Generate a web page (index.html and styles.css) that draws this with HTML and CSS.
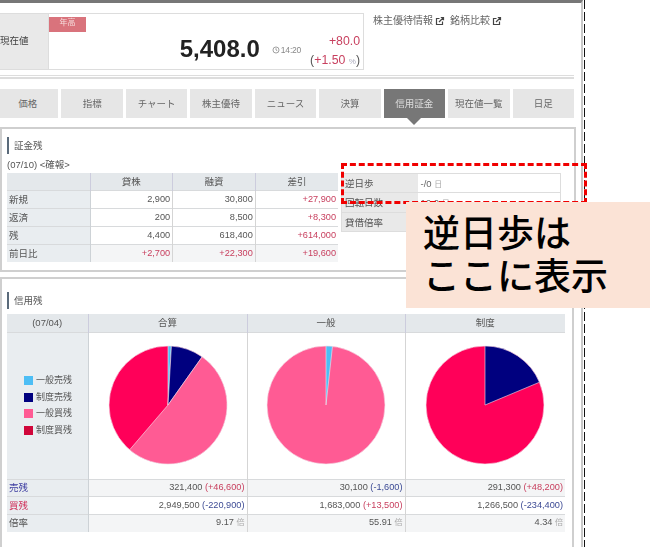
FILE: index.html
```html
<!DOCTYPE html>
<html lang="ja">
<head>
<meta charset="utf-8">
<title>信用証金</title>
<link rel="stylesheet" href="styles.css">
</head>
<body>
<div class="stage">
  <div class="outer">
    <div class="page">
      <section class="quote">
        <div class="quote-label">現在値</div>
        <div class="quote-box">
          <span class="badge">年高</span>
          <div class="price-line">
            <span class="price">5,408.0</span>
            <span class="time"><svg class="clock" viewBox="0 0 10 10"><circle cx="5" cy="5" r="3.8"/><path d="M5 2.8V5l1.6 1"/></svg>14:20</span>
            <div class="change">
              <span class="up big">+80.0</span>
              <span class="big">(<span class="up">+1.50</span> <small>%</small>)</span>
            </div>
          </div>
        </div>
        <div class="links">
          <span>株主優待情報</span>
          <svg class="ext" viewBox="0 0 10 10"><path d="M7.5 5.5V8.5H1.5V2.5H4.5M4 6l4.5-4.5M5.8 1.5H8.5V4.2"/></svg>
          <span>銘柄比較</span>
          <svg class="ext" viewBox="0 0 10 10"><path d="M7.5 5.5V8.5H1.5V2.5H4.5M4 6l4.5-4.5M5.8 1.5H8.5V4.2"/></svg>
        </div>
      </section>
      <div class="rule"></div>
      <nav class="tabs">
        <span class="tab">価格</span>
        <span class="tab">指標</span>
        <span class="tab">チャート</span>
        <span class="tab">株主優待</span>
        <span class="tab">ニュース</span>
        <span class="tab">決算</span>
        <span class="tab active">信用証金</span>
        <span class="tab">現在値一覧</span>
        <span class="tab">日足</span>
      </nav>

      <section class="card card-top">
        <h2 class="heading">証金残</h2>
        <p class="date">(07/10) &lt;確報&gt;</p>
        <div class="card-row">
          <table class="grid lending">
            <thead>
              <tr><th></th><th>貸株</th><th>融資</th><th>差引</th></tr>
            </thead>
            <tbody>
              <tr><th>新規</th><td>2,900</td><td>30,800</td><td class="up">+27,900</td></tr>
              <tr><th>返済</th><td>200</td><td>8,500</td><td class="up">+8,300</td></tr>
              <tr><th>残</th><td>4,400</td><td>618,400</td><td class="up">+614,000</td></tr>
              <tr class="shade"><th>前日比</th><td class="up">+2,700</td><td class="up">+22,300</td><td class="up">+19,600</td></tr>
            </tbody>
          </table>
          <table class="side">
            <tr><th>逆日歩</th><td>-/0 <small>日</small></td></tr>
            <tr><th>回転日数</th><td>16.0 <small>日</small></td></tr>
            <tr><th>貸借倍率</th><td></td></tr>
          </table>
        </div>
      </section>

      <section class="card card-bottom">
        <h2 class="heading">信用残</h2>
        <table class="grid margin">
          <thead>
            <tr><th class="center">(07/04)</th><th>合算</th><th>一般</th><th>制度</th></tr>
          </thead>
          <tbody>
            <tr class="chart-row">
              <th>
                <ul class="legend">
                  <li><i class="sw s1"></i>一般売残</li>
                  <li><i class="sw s2"></i>制度売残</li>
                  <li><i class="sw s3"></i>一般買残</li>
                  <li><i class="sw s4"></i>制度買残</li>
                </ul>
              </th>
              <td>
                <svg class="pie" viewBox="-60 -60 120 120">
                  <circle r="59" class="p4"/>
                  <path class="p1" d="M0 0V-59A59 59 0 0 1 3.41 -58.9Z"/>
                  <path class="p2" d="M0 0L3.41 -58.9A59 59 0 0 1 34.14 -48.12Z"/>
                  <path class="p3" d="M0 0L34.14 -48.12A59 59 0 1 1 -38.36 44.82Z"/>
                </svg>
              </td>
              <td>
                <svg class="pie" viewBox="-60 -60 120 120">
                  <circle r="59" class="p3"/>
                  <path class="p1" d="M0 0V-59A59 59 0 0 1 6.47 -58.64Z"/>
                </svg>
              </td>
              <td>
                <svg class="pie" viewBox="-60 -60 120 120">
                  <circle r="59" class="p4"/>
                  <path class="p2" d="M0 0V-59A59 59 0 0 1 54.43 -22.77Z"/>
                </svg>
              </td>
            </tr>
            <tr class="shade"><th class="sell">売残</th><td>321,400 <span class="up">(+46,600)</span></td><td>30,100 <span class="down">(-1,600)</span></td><td>291,300 <span class="up">(+48,200)</span></td></tr>
            <tr><th class="buy">買残</th><td>2,949,500 <span class="down">(-220,900)</span></td><td>1,683,000 <span class="up">(+13,500)</span></td><td>1,266,500 <span class="down">(-234,400)</span></td></tr>
            <tr class="shade"><th>倍率</th><td>9.17 <small>倍</small></td><td>55.91 <small>倍</small></td><td>4.34 <small>倍</small></td></tr>
          </tbody>
        </table>
      </section>
    </div>
  </div>
  <div class="dash-box"></div>
  <div class="callout">逆日歩は<br>ここに表示</div>
</div>
</body>
</html>
```
FILE: styles.css
```css
* { box-sizing: border-box; }
html, body { margin: 0; padding: 0; background: #fff; }
body {
  font-family: "Liberation Sans", "Noto Sans CJK JP", sans-serif;
  color: #555;
  font-size: 9.5px;
}
.stage { position: relative; width: 650px; height: 547px; overflow: hidden; }
.outer {
  width: 585px;
  height: 547px;
  padding-right: 2px;
  background: repeating-linear-gradient(to bottom, #111 0 9px, transparent 9px 12px) right top / 1.3px 100% no-repeat;
}
.page {
  height: 547px;
  border-top: 3px solid #777;
  border-right: 2px solid #c8c8c8;
  padding: 10px 7px 0 0;
  filter: blur(0.4px);
}
.quote { display: flex; height: 57px; }
.quote-label {
  width: 48px;
  background: #e9e9e9;
  border-top: 1px solid #ddd;
  border-bottom: 1px solid #ddd;
  display: flex;
  align-items: center;
  font-size: 9.5px;
  color: #444;
  padding-bottom: 3px;
}
.quote-box {
  width: 316px;
  border: 1px solid #ddd;
  position: relative;
  padding: 3px 0 0 0;
}
.badge {
  display: block;
  width: 37px;
  height: 15px;
  background: #d9737c;
  color: #f6dcdc;
  font-size: 8px;
  line-height: 12px;
  text-align: center;
}
.price-line { display: flex; justify-content: flex-end; align-items: flex-start; padding-right: 3px; margin-top: 2px; }
.price { font-size: 24px; font-weight: 700; color: #222; line-height: 28px; margin-top: 1px; }
.time { font-size: 8.5px; color: #888; margin: 11px 9px 0 12px; display: flex; align-items: center; gap: 1px; letter-spacing: -0.2px; }
.clock { width: 8px; height: 8px; fill: none; stroke: #888; stroke-width: 1; }
.change { display: flex; flex-direction: column; align-items: flex-end; margin-top: -2px; }
.big { font-size: 12.3px; line-height: 18.5px; color: #555; }
.big.up { color: #c8405f; }
.big small { font-size: 8px; color: #aab; }
.up { color: #c8405f; }
.down { color: #3c4a94; }
.links {
  display: flex;
  align-items: flex-start;
  margin-left: 9px;
  font-size: 10px;
  color: #666;
  line-height: 15px;
}
.ext { width: 10px; height: 10px; margin: 3px 5px 0 2px; fill: none; stroke: #444; stroke-width: 1.2; }
.rule {
  height: 4px;
  margin-top: 5px;
  border-top: 1px solid #ddd;
  border-bottom: 2px solid #ddd;
}
.tabs { display: flex; gap: 3px; margin: 10px 0 0 -3px; }
.tab {
  flex: 1 1 0;
  height: 29px;
  background: #e6e6e6;
  color: #666;
  font-size: 9.5px;
  display: flex;
  align-items: center;
  justify-content: center;
  position: relative;
  padding-bottom: 2px;
}
.tab.active { background: #777; color: #ddd; }
.tab.active::after {
  content: "";
  position: absolute;
  left: 50%;
  top: 100%;
  margin-left: -7px;
  border-left: 7px solid transparent;
  border-right: 7px solid transparent;
  border-top: 7px solid #777;
}
.card {
  border: 2.5px solid #cfcfcf;
  background: #fff;
  padding: 0 0 0 5px;
}
.card-top { height: 145px; margin: 9px -2px 5px 0; padding-top: 8px; }
.card-bottom {
  height: 280px;
  border-bottom: 0;
  padding-top: 13px;
}
.heading {
  margin: 0;
  border-left: 2px solid #5a6a7a;
  padding-left: 5px;
  font-size: 9.5px;
  font-weight: 400;
  line-height: 17px;
  color: #555;
}
.date { margin: 3px 0 0; font-size: 9.5px; line-height: 16px; color: #555; }
.card-row { display: flex; align-items: flex-start; gap: 3px; }
table { border-collapse: collapse; table-layout: fixed; }
.grid th, .grid td { padding: 0 2px; font-size: 9.5px; font-weight: 400; line-height: 1; }
.grid td { font-size: 9.2px; }
.grid thead th { background: #e4e8eb; text-align: center; border-right: 1px solid #ccd; color: #555; }
.grid thead th:last-child { border-right: 0; }
.grid tbody th { background: #e9edf0; text-align: left; border-right: 1px solid #cdd2d6; color: #555; }
.grid td { text-align: right; border-right: 1px solid #d5d5d5; }
.grid td:last-child { border-right: 0; }
.grid tbody tr { border-top: 1px solid #d8dadc; }
.grid .shade td { background: #f4f5f6; }
.grid small { font-size: 8px; color: #aaa; }
.lending { width: 331px; }
.lending th:first-child { width: 83px; }
.lending tr { height: 17.8px; }
.side { width: 220px; border: 1px solid #ddd; height: 59px; }
.side th {
  width: 76px;
  background: #e9e9e9;
  font-weight: 400;
  font-size: 9.5px;
  text-align: left;
  padding: 0 3px;
  border-bottom: 1px solid #ddd;
  color: #555;
}
.side td { padding: 0 3px; border-bottom: 1px solid #ddd; font-size: 9.5px; color: #666; }
.side small { font-size: 8px; color: #aaa; }
.margin { width: 558px; margin-top: 5px; }
.margin th:first-child { width: 81px; }
.margin thead th:nth-child(2) { width: 159px; }
.margin thead th:nth-child(3) { width: 158px; }
.margin thead tr { height: 18px; }
.margin tbody tr { height: 17.5px; }
.margin .center { text-align: center; }
.margin .chart-row { height: 147px; border-top: 1px solid #d8dadc; }
.chart-row td { text-align: center; padding: 0; background: #fff; }
.pie { display: block; width: 120px; height: 120px; margin: -2px auto 0; }
.pie circle, .pie path { stroke: #f3e8ee; stroke-width: 0.6; }
.p1 { fill: #4dbef5; }
.p2 { fill: #00007f; }
.p3 { fill: #ff5b94; }
.p4 { fill: #ff0059; }
.legend { list-style: none; margin: 0; padding: 0 0 0 15px; }
.legend li { display: flex; align-items: center; height: 16.4px; font-size: 9px; color: #555; white-space: nowrap; }
.sw { width: 9px; height: 9px; margin-right: 3px; flex: none; }
.s1 { background: #4dbef5; }
.s2 { background: #00007f; }
.s3 { background: #ff5b94; }
.s4 { background: #d0063a; }
.grid .sell { color: #3c3ca0; }
.grid .buy { color: #d0305a; }
.dash-box {
  position: absolute;
  left: 341px;
  top: 163px;
  width: 246px;
  height: 41px;
  border: 3px dashed #f00000;
}
.callout {
  position: absolute;
  left: 406px;
  top: 202px;
  width: 244px;
  height: 106px;
  background: #fbe3d6;
  color: #000;
  font-family: "Noto Sans CJK JP", sans-serif;
  font-weight: 500;
  font-size: 37px;
  line-height: 43px;
  padding: 8px 0 0 17px;
}
```
